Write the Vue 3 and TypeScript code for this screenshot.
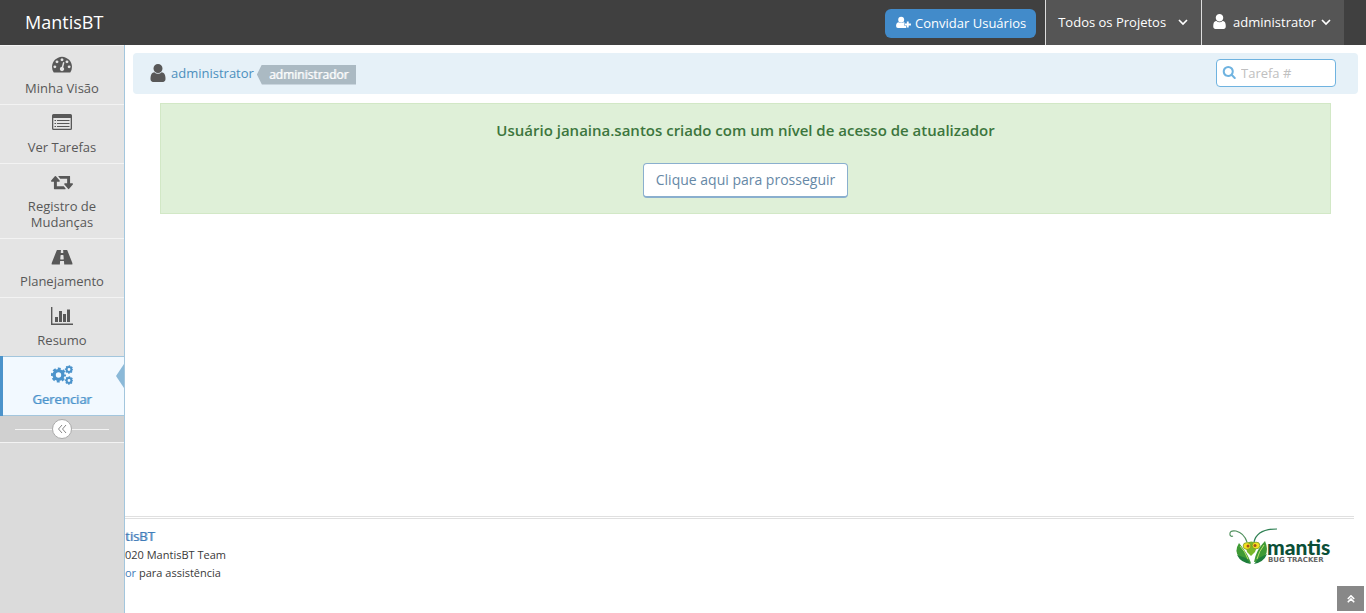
<script setup lang="ts">
import { ref } from 'vue'

interface NavItem {
  label: string
  icon: 'gauge' | 'list' | 'retweet' | 'road' | 'chart' | 'cogs'
  active?: boolean
}

const items: NavItem[] = [
  { label: 'Minha Visão', icon: 'gauge' },
  { label: 'Ver Tarefas', icon: 'list' },
  { label: 'Registro de Mudanças', icon: 'retweet' },
  { label: 'Planejamento', icon: 'road' },
  { label: 'Resumo', icon: 'chart' },
  { label: 'Gerenciar', icon: 'cogs', active: true },
]

const userPath =
  'M1280 1399q0 109-62.5 187t-150.5 78h-854q-88 0-150.5-78t-62.5-187q0-85 8.5-160.5t31.5-152 58.5-131 94-89 134.5-34.5q131 128 313 128t313-128q76 0 134.5 34.5t94 89 58.5 131 31.5 152 8.5 160.5zm-256-887q0 159-112.5 271.5t-271.5 112.5-271.5-112.5-112.5-271.5 112.5-271.5 271.5-112.5 271.5 112.5 112.5 271.5z'

const issue = ref('')
</script>

<template>
  <div class="page">
    <header class="navbar">
      <a class="brand" href="#">MantisBT</a>
      <div class="tools">
        <a class="invite" href="#">
          <svg class="plus-icon" viewBox="0 0 16 14" aria-hidden="true">
            <circle cx="5.5" cy="4" r="3.2" />
            <path d="M3 6.6Q5.5 8.7 8 6.600Q9 6.700 9.700 7.500V10.300H11.300V12.300Q10.700 13 9.500 13H2Q0 13 0 10.800Q0 6.800 3 6.600Z" />
            <path d="M11.600 5.800H13.600V8.100H16V10.100H13.600V12.400H11.600V10.100H9.200V8.100H11.600Z" class="plus" />
          </svg>
          <span>Convidar Usuários</span>
        </a>
        <button class="tool projects" type="button">
          <span>Todos os Projetos</span>
          <svg class="caret" viewBox="0 0 10 8" aria-hidden="true"><path d="M1 2l4 4 4-4" /></svg>
        </button>
        <button class="tool account" type="button">
          <svg class="user-white" viewBox="0 128 1280 1536" aria-hidden="true"><path :d="userPath" /></svg>
          <span>administrator</span>
          <svg class="caret" viewBox="0 0 10 8" aria-hidden="true"><path d="M1 2l4 4 4-4" /></svg>
        </button>
      </div>
    </header>

    <div class="body">
      <aside class="sidebar">
        <nav>
          <a v-for="item in items" :key="item.label" href="#" class="nav-item" :class="{ active: item.active }">
            <svg v-if="item.icon === 'gauge'" viewBox="-90 0 1972 1792" aria-hidden="true">
              <path d="M384 1152q0-53-37.5-90.5t-90.5-37.5-90.5 37.5-37.5 90.5 37.5 90.5 90.5 37.5 90.5-37.5 37.5-90.5zm192-448q0-53-37.5-90.5t-90.5-37.5-90.5 37.5-37.5 90.5 37.5 90.5 90.5 37.5 90.5-37.5 37.5-90.5zm428 481l101-382q6-26-7.5-48.5t-38.5-29.5-48 6.5-30 39.5l-101 382q-60 5-107 43.5t-63 98.5q-20 77 20 146t117 89 146-20 89-117q16-60-6-117t-72-91zm660-33q0-53-37.5-90.5t-90.5-37.5-90.5 37.5-37.5 90.5 37.5 90.5 90.5 37.5 90.5-37.5 37.5-90.5zm-640-640q0-53-37.5-90.5t-90.5-37.5-90.5 37.5-37.5 90.5 37.5 90.5 90.5 37.5 90.5-37.5 37.5-90.5zm448 192q0-53-37.5-90.5t-90.5-37.5-90.5 37.5-37.5 90.5 37.5 90.5 90.5 37.5 90.5-37.5 37.5-90.5zm320 448q0 261-141 483-19 29-54 29h-1402q-35 0-54-29-141-221-141-483 0-182 71-348t191-286 286-191 348-71 348 71 286 191 191 286 71 348z" />
            </svg>
            <svg v-else-if="item.icon === 'list'" viewBox="0 0 22 20" aria-hidden="true">
              <path fill-rule="evenodd" d="M2.500 1H19.500Q21 1 21 2.500V15.500Q21 17 19.500 17H2.500Q1 17 1 15.500V2.500Q1 1 2.500 1ZM2.300 5V15.200Q2.300 15.700 2.800 15.700H19.200Q19.700 15.700 19.700 15.200V5Z" />
              <path d="M3.500 7h1.500v1h-1.500zM6 7h12.500v1H6zM3.500 10h1.500v1h-1.500zM6 10h12.500v1H6zM3.500 13h1.500v1h-1.500zM6 13h12.500v1H6z" />
            </svg>
            <svg v-else-if="item.icon === 'retweet'" viewBox="0 40 1920 1746" aria-hidden="true">
              <path d="M1280 1504q0 13-9.500 22.500t-22.500 9.500h-960q-8 0-13.500-2t-9-7-5.500-8-3-11.500-1-11.500v-600h-192q-26 0-45-19t-19-45q0-24 15-41l320-384q19-22 49-22t49 22l320 384q15 17 15 41 0 26-19 45t-45 19h-192v384h576q16 0 25 11l160 192q7 10 7 21zm640-416q0 24-15 41l-320 384q-20 23-49 23t-49-23l-320-384q-15-17-15-41 0-26 19-45t45-19h192v-384h-576q-16 0-25-12l-160-192q-7-9-7-20 0-13 9.500-22.500t22.500-9.500h960q8 0 13.500 2t9 7 5.500 8 3 11.500 1 11.500v600h192q26 0 45 19t19 45z" />
            </svg>
            <svg v-else-if="item.icon === 'road'" viewBox="0 -60 1920 1746" aria-hidden="true">
              <path d="M1111 1000v-4l-24-320q-1-13-11-22.500t-23-9.500h-186q-13 0-23 9.500t-11 22.500l-24 320v4q-1 12 8 20t21 8h244q12 0 21-8t8-20zm762 404q0 73-46 73h-704q13 0 22-9.500t8-22.500l-20-256q-1-13-11-22.500t-23-9.500h-272q-13 0-23 9.500t-11 22.500l-20 256q-1 13 8 22.500t22 9.500h-704q-46 0-46-73 0-54 26-116l417-1044q8-19 26-33t38-14h339q-13 0-23 9.500t-11 22.500l-15 192q-1 14 8 23t22 9h166q13 0 22-9t8-23l-15-192q-1-13-11-22.500t-23-9.500h339q20 0 38 14t26 33l417 1044q26 62 26 116z" />
            </svg>
            <svg v-else-if="item.icon === 'chart'" viewBox="0 0 22 20" aria-hidden="true">
              <path d="M0 1h1.400v16.600H22V19H0zM4 11h3v5H4zM8 5h3v11H8zM12 8h3v8h-3zM16 3.500h3V16h-3z" />
            </svg>
            <svg v-else class="cogs" viewBox="0 0 22 20" aria-hidden="true">
              <circle cx="7.500" cy="10" r="4.400" stroke-width="3.400" />
              <circle cx="7.500" cy="10" r="6.400" stroke-width="2.200" stroke-dasharray="2.900 2.126" stroke-dashoffset="1.450" />
              <circle cx="18" cy="4.500" r="2.400" stroke-width="2" />
              <circle cx="18" cy="4.500" r="3.500" stroke-width="1.400" stroke-dasharray="1.500 1.249" stroke-dashoffset="0.750" />
              <circle cx="18" cy="15.500" r="2.400" stroke-width="2" />
              <circle cx="18" cy="15.500" r="3.500" stroke-width="1.400" stroke-dasharray="1.500 1.249" stroke-dashoffset="0.750" />
            </svg>
            <span>{{ item.label }}</span>
          </a>
        </nav>
        <div class="collapse">
          <button type="button" aria-label="Recolher menu">
            <svg viewBox="0 0 10 10" aria-hidden="true"><path d="M5 1L1.500 5 5 9M9 1L5.500 5 9 9" /></svg>
          </button>
        </div>
      </aside>

      <div class="main">
        <div class="crumbs">
          <svg class="user-dark" viewBox="0 128 1280 1536" aria-hidden="true"><path :d="userPath" /></svg>
          <a href="#">administrator</a>
          <span class="role">administrador</span>
          <label class="search">
            <svg viewBox="0 128 1728 1664" aria-hidden="true">
              <path d="M1216 832q0-185-131.500-316.500t-316.500-131.500-316.500 131.500-131.500 316.500 131.500 316.500 316.500 131.500 316.500-131.500 131.500-316.500zm512 832q0 52-38 90t-90 38q-54 0-90-38l-343-342q-179 124-399 124-143 0-273.500-55.500t-225-150-150-225-55.500-273.500 55.500-273.500 150-225 225-150 273.500-55.500 273.500 55.500 225 150 150 225 55.500 273.500q0 220-124 399l343 343q37 37 37 90z" />
            </svg>
            <input v-model="issue" type="text" placeholder="Tarefa #" aria-label="Tarefa #" />
          </label>
        </div>

        <section class="alert">
          <p>Usuário janaina.santos criado com um nível de acesso de atualizador</p>
          <a class="proceed" href="#">Clique aqui para prosseguir</a>
        </section>

        <footer class="footer">
          <div class="credits">
            <a class="product" href="#">tisBT</a>
            <small>020 MantisBT Team</small>
            <small><a href="#">or</a> para assistência</small>
          </div>
          <svg class="logo" viewBox="0 0 104 38" role="img" aria-label="Mantis Bug Tracker">
            <path d="M18 14Q15 5 7 3Q0 2 1 7Q2 9 4 8" fill="none" stroke="#4f8f5c" stroke-width="1.200" />
            <path d="M25 14Q28 1 48 1" fill="none" stroke="#2f8154" stroke-width="1.200" />
            <path d="M10 15Q5 23 10 29Q15 34 22 35Q19 26 10 15Z" fill="#3f9a35" />
            <path d="M36 13Q40 22 36 28Q32 34 25 34Q27 22 36 13Z" fill="#3f9a35" />
            <path d="M8 27L17 30 22 36Q12 35 8 27ZM38 26L30 30 25 36Q35 34 38 26Z" fill="#1e7d3b" />
            <path d="M11 18Q16 23 19 31M35 17Q30 23 28 31" fill="none" stroke="#bfe06c" stroke-width="1" />
            <path d="M16 16Q22 11 29 16L26 24 22 28 18 24Z" fill="#79b829" />
            <ellipse cx="18" cy="18" rx="3.900" ry="3.400" fill="#f4df20" stroke="#659421" stroke-width=".7" />
            <ellipse cx="27" cy="17.500" rx="3.900" ry="3.400" fill="#f4df20" stroke="#659421" stroke-width=".7" />
            <circle cx="19" cy="18" r="1.500" fill="#a55218" />
            <circle cx="26" cy="17.500" r="1.500" fill="#a55218" />
            <text x="38" y="27" class="logo-name">mantis</text>
            <text x="39" y="34" class="logo-sub">BUG TRACKER</text>
          </svg>
        </footer>
      </div>
    </div>

    <a class="to-top" href="#" aria-label="Voltar ao topo">
      <svg viewBox="0 0 10 10" aria-hidden="true"><path d="M1 5l4-4 4 4M1 9l4-4 4 4" /></svg>
    </a>
  </div>
</template>

<style>
body {
  margin: 0;
  background: #fff;
}
</style>

<style scoped>
.page {
  display: flex;
  flex-direction: column;
  min-height: 100vh;
  font: 13px/20px 'Open Sans', sans-serif;
  color: #393939;
}
.page * {
  box-sizing: border-box;
}
a {
  color: #4c8fbd;
  text-decoration: none;
}
svg {
  flex: none;
  fill: currentColor;
}
button {
  font: inherit;
  cursor: pointer;
}
.navbar {
  display: flex;
  justify-content: space-between;
  height: 45px;
  padding: 0 22px 0 25px;
  background: #404040;
}
.brand {
  font-size: 18px;
  line-height: 44px;
  color: #fff;
}
.tools {
  display: flex;
  align-items: center;
}
.invite {
  display: flex;
  align-items: center;
  gap: 4px;
  height: 29px;
  margin: 2px 9px 0 0;
  padding: 0 10px 2px 11px;
  border-radius: 6px;
  background: #428bca;
  color: #fff;
}
.plus-icon {
  width: 15px;
  height: 13px;
}
.plus {
  stroke: #428bca;
  stroke-width: 1;
  paint-order: stroke;
}
.tool {
  display: flex;
  align-items: center;
  height: 45px;
  border: 0;
  border-left: 1px solid #ddd;
  background: #555;
  color: #fff;
}
.projects {
  gap: 12px;
  padding: 0 13px 2px 12px;
}
.account {
  gap: 7px;
  padding: 0 13px 2px 11px;
}
.account .caret {
  margin-left: -2px;
}
.caret {
  width: 10px;
  height: 8px;
  fill: none;
  stroke: currentColor;
  stroke-width: 1.7;
}
.user-white {
  width: 13px;
  height: 15px;
}
.body {
  display: flex;
  flex: 1;
}
.sidebar {
  flex: none;
  width: 125px;
  border-right: 1px solid #a3c6dd;
  background: #dbdbdb;
}
.nav-item {
  position: relative;
  display: flex;
  flex-direction: column;
  align-items: center;
  padding: 8px 12px;
  border-top: 1px solid #f3f3f3;
  background: #e4e4e4;
  color: #585858;
  line-height: 16px;
  text-align: center;
}
.nav-item svg {
  width: 22px;
  height: 20px;
  margin-bottom: 6px;
}
.nav-item.active {
  border-top-color: #a3c6dd;
  border-bottom: 1px solid #a3c6dd;
  background: #f2f9ff;
  color: #4b93cb;
}
.nav-item.active span {
  text-shadow: 1px 0 0 rgb(75 147 203 / 60%);
}
.nav-item.active::before {
  content: '';
  position: absolute;
  inset: -1px auto -1px 0;
  width: 3px;
  background: #4b93cb;
}
.nav-item.active::after {
  content: '';
  position: absolute;
  top: 7px;
  right: 0;
  border: solid transparent;
  border-width: 12px 8px 12px 0;
  border-right-color: #8bb9d8;
}
.nav-item .cogs {
  fill: none;
  stroke: currentColor;
}
.collapse {
  display: flex;
  align-items: center;
  height: 27px;
  padding: 0 15px;
  border-bottom: 1px solid #f3f3f3;
  background: #d0d0d0;
}
.collapse::before,
.collapse::after {
  content: '';
  flex: 1;
  height: 1px;
  background: #f3f3f3;
}
.collapse button {
  display: grid;
  place-items: center;
  width: 20px;
  height: 20px;
  padding: 0;
  border: 1px solid #aaa;
  border-radius: 50%;
  background: #fff;
  color: #888;
}
.collapse svg,
.to-top svg {
  width: 10px;
  height: 10px;
  fill: none;
  stroke: currentColor;
}
.main {
  display: flex;
  flex: 1;
  flex-direction: column;
  min-width: 0;
}
.crumbs {
  display: flex;
  align-items: center;
  height: 41px;
  margin: 8px 8px 9px;
  padding: 0 22px 2px 17px;
  border-radius: 4px;
  background: #e6f1f8;
}
.user-dark {
  width: 16px;
  height: 18px;
  margin-right: 5px;
  color: #585858;
}
.role {
  margin: 4px 0 0 3px;
  padding: 0 8px 0 12px;
  background: #abbac3;
  color: #fff;
  font-size: 12px;
  line-height: 20px;
  text-shadow: 1px 0 0 rgb(255 255 255 / 60%);
  clip-path: polygon(5px 0, 100% 0, 100% 100%, 5px 100%, 0 50%);
}
.search {
  display: flex;
  align-items: center;
  gap: 5px;
  width: 120px;
  height: 28px;
  margin-left: auto;
  padding: 0 5px;
  border: 1px solid #6fb3e0;
  border-radius: 4px;
  background: #fff;
  color: #6fb3e0;
}
.search svg {
  width: 14px;
  height: 13px;
}
.search input {
  width: 80px;
  padding: 0;
  border: 0;
  outline: 0;
  background: none;
  font: inherit;
}
.search input::placeholder {
  color: #c0c0c0;
  opacity: 1;
}
.alert {
  display: flex;
  flex-direction: column;
  align-items: center;
  margin: 0 35px;
  padding: 16px 15px 15px;
  border: 1px solid #d2e8c6;
  background: #dff0d8;
  color: #3c763d;
}
.alert p {
  margin: 0 0 22px;
  font-size: 15px;
  font-weight: 600;
  line-height: 21px;
}
.proceed {
  padding: 6px 12px;
  border: 1px solid #8aafce;
  border-bottom-width: 2px;
  border-radius: 4px;
  background: #fff;
  color: #6688a6;
  font-size: 14px;
}
.footer {
  display: flex;
  justify-content: space-between;
  height: 97px;
  margin: auto 12px 0 0;
  padding: 7px 21px 0 0;
  border-top: 3px double #e0e0e0;
}
.credits {
  display: flex;
  flex-direction: column;
  white-space: nowrap;
}
.credits a {
  color: #3f7cb8;
}
.credits .product {
  text-shadow: 1px 0 0 rgb(63 124 184 / 60%);
}
.credits small {
  font-size: 11px;
  line-height: 18px;
}
.logo {
  width: 104px;
  height: 38px;
  margin-top: 2px;
  overflow: visible;
}
.logo-name {
  fill: #0b4f38;
  font: 900 21px Lato, sans-serif;
}
.logo-sub {
  fill: #666;
  font: 700 7px 'DejaVu Sans', sans-serif;
}
.to-top {
  position: fixed;
  right: 2px;
  bottom: 2px;
  display: grid;
  place-items: center;
  width: 27px;
  height: 25px;
  background: #888;
  color: #fff;
}
.to-top svg {
  width: 8px;
  height: 8px;
  stroke-width: 2;
}
</style>
